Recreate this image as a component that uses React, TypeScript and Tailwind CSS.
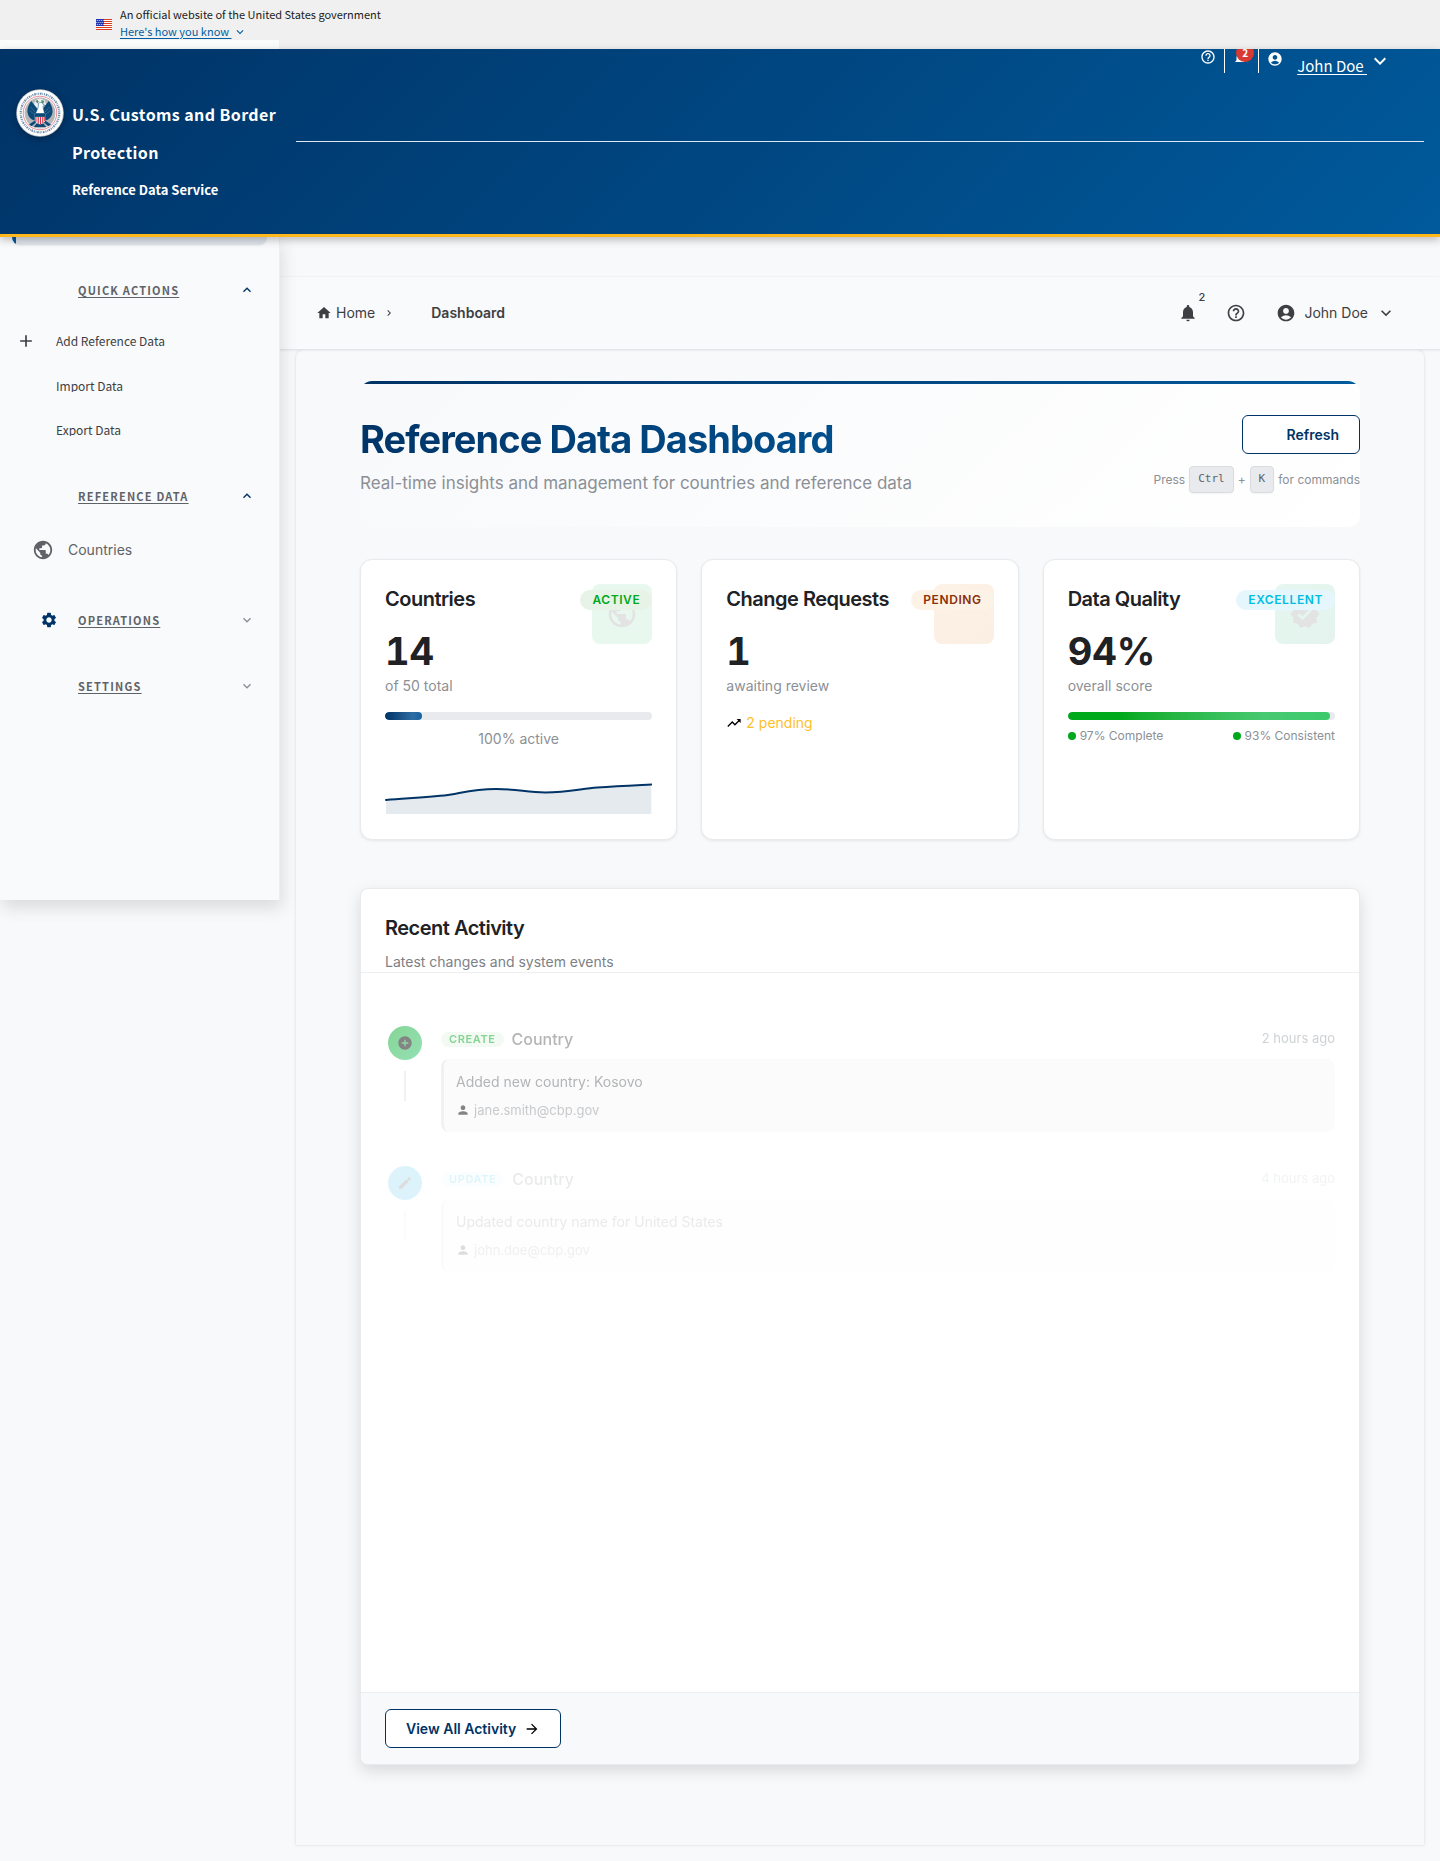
import type { ReactNode } from 'react';
import {
  MdAccountCircle,
  MdAdd,
  MdAddCircle,
  MdArrowForward,
  MdEdit,
  MdExpandLess,
  MdExpandMore,
  MdHelpOutline,
  MdHome,
  MdNavigateNext,
  MdNotifications,
  MdPerson,
  MdPublic,
  MdSettings,
  MdTrendingUp,
  MdVerified,
} from 'react-icons/md';

function Flag() {
  return (
    <svg viewBox="0 0 16 11" className="h-[11px] w-4 shrink-0" aria-hidden="true">
      <rect width="16" height="11" fill="#fff" />
      {[0, 2, 4, 6, 8, 10].map((y) => (
        <rect key={y} y={y} width="16" height="1" fill="#db3e1f" />
      ))}
      <rect width="8" height="7" fill="#1e33b1" />
      {[1, 3, 5].map((y) =>
        [1, 3, 5, 7].map((x) => (
          <rect key={`${x}-${y}`} x={y === 3 ? x - 0.6 : x - 0.2} y={y} width="0.9" height="0.9" fill="#fff" />
        )),
      )}
    </svg>
  );
}

function Seal() {
  return (
    <svg viewBox="0 0 48 48" className="h-12 w-12 shrink-0 drop-shadow-[0_2px_3px_rgba(0,0,0,0.3)]" role="img" aria-label="Department seal">
      <circle cx="24" cy="24" r="23.8" fill="#b9bcc0" />
      <circle cx="24" cy="24" r="23" fill="#fff" />
      <circle cx="24" cy="24" r="19.3" fill="none" stroke="#2f5f86" strokeWidth="2.2" strokeDasharray="1 0.9 1.6 0.8 0.7 0.9" opacity="0.7" />
      <circle cx="24" cy="24" r="16.8" fill="#fff" stroke="#e0707c" strokeWidth="0.8" />
      <circle cx="24" cy="24" r="15.4" fill="#b4b6b8" />
      <circle cx="24" cy="15.4" r="6" fill="#e9eef2" />
      <path d="M19.5 12.5l1.6-1.800 1.600 1.500-1 2.400zM25.500 10.800l2.600 1.200-.6 2.600-2-.6z" fill="#5b8f6a" />
      <path d="M22 20.500l-6.800-8.500c-2.300 3.500-4.400 8-3.600 12 .6 3.400 3 6.500 7 7.500zM26 20.500l6.800-8.500c2.300 3.500 4.400 8 3.600 12-.6 3.400-3 6.500-7 7.500z" fill="#0b4a78" />
      <path d="M14.500 18l5 5.500M13.500 21.500l5 4M33.500 18l-5 5.500M34.500 21.500l-5 4" stroke="#5d86a6" strokeWidth="0.5" />
      <path d="M22.600 14.400c1.600-1.800 4.300-.8 4.500 1.200l1.800.8-2 .8 1.600 7.300h-9l2.700-6z" fill="#fff" stroke="#0b4a78" strokeWidth="0.500" />
      <path d="M20.600 34.500h6.800l2.800 3.400H17.800zM13 35.500l5.600-3.800 1.400 1.800-4.400 3.700zM35 35.500l-5.600-3.800-1.400 1.800 4.400 3.700z" fill="#0b4a78" />
      <path d="M18.800 24.500h10.400v5.700c0 2.700-2.300 4-5.200 5.400-2.900-1.400-5.200-2.700-5.200-5.400z" fill="#fff" />
      <path d="M19.300 28h1.200v5h-1.200zM21.600 28h1.200v6.800h-1.200zM23.900 28h1.200v7.400h-1.200zM26.200 28h1.200v6h-1.200zM28.200 28h.8v4h-.8z" fill="#d4354a" />
      <path d="M18.800 24.300h10.400v3.600H18.800z" fill="#0b4a78" />
    </svg>
  );
}

function GovBanner() {
  return (
    <div className="relative flex h-[49px] items-center bg-[#f0f0f0] pl-24">
      <Flag />
      <div className="ml-2 -mt-[3px] font-['Noto_Sans_CJK_SC',sans-serif] text-[11px] leading-[17px] text-[#1b1b1b]">
        <p>An official website of the United States government</p>
        <button type="button" className="flex items-center gap-px text-[#005ea2]">
          <span className="whitespace-pre underline underline-offset-2">Here's how you know </span>
          <MdExpandMore className="h-[14px] w-[14px]" />
        </button>
      </div>
      <div className="absolute bottom-0 left-0 h-[9px] w-[279px] bg-[#fafcfc]" />
    </div>
  );
}

function SiteHeader() {
  return (
    <header className="relative z-20 flex border-b-[3px] border-[#ffb81c] bg-linear-135 from-[#003366] to-[#005a9c] font-['Noto_Sans_CJK_SC',sans-serif] text-white shadow-[0_3px_8px_rgba(0,0,0,0.25)]">
      <div className="flex w-[296px] shrink-0 gap-2 pt-10 pb-[25px] pl-4">
        <Seal />
        <div className="mt-[6px] font-bold">
          <p className="text-base leading-[38px] tracking-[0.4px]">U.S. Customs and Border Protection</p>
          <p className="text-[13px] leading-[38px]">Reference Data Service</p>
        </div>
      </div>
      <div className="min-w-0 flex-1 pr-4">
        <div className="flex h-6 justify-end pr-8">
          <button type="button" aria-label="Help" className="flex h-4 w-8 justify-center">
            <MdHelpOutline className="h-4 w-4" />
          </button>
          <div className="h-6 w-[35px] border-x border-white">
            <button type="button" aria-label="Notifications" className="relative block h-[13px] w-8 overflow-hidden">
              <MdNotifications className="absolute top-[2px] left-2 h-[14px] w-[14px]" />
              <span className="absolute top-[-5px] left-[11px] flex h-[18px] w-[18px] items-center justify-center rounded-full bg-[#d83933] text-[10px] leading-none font-bold">2</span>
            </button>
          </div>
          <button type="button" className="flex h-6 pl-2">
            <MdAccountCircle className="mt-[2px] h-4 w-4" />
            <span className="ml-[14px] whitespace-pre text-[15px] leading-[34px] underline underline-offset-2">John Doe </span>
            <MdExpandMore className="ml-px h-6 w-6" />
          </button>
        </div>
        <div className="mt-[68px] border-t border-[#dfe8f1]" />
      </div>
    </header>
  );
}

function GroupHeading({ label, open, icon }: { label: string; open?: boolean; icon?: ReactNode }) {
  return (
    <button
      type="button"
      aria-expanded={!!open}
      className="flex h-[42px] w-full items-center pr-6 pl-10 font-['Noto_Sans_CJK_SC',sans-serif] text-[11px] font-bold tracking-[1.2px] text-[#5f6368]"
    >
      <span className="w-[38px] text-[#003366]">{icon}</span>
      <span className="flex-1 text-left underline underline-offset-2">{label}</span>
      {open ? <MdExpandLess className="h-4 w-4 text-[#003366]" /> : <MdExpandMore className="h-4 w-4 text-[#8b9096]" />}
    </button>
  );
}

function Sidebar() {
  return (
    <aside className="relative z-10 h-[663px] w-[280px] shrink-0 border-r border-[#eceef1] bg-[#f9fafc] shadow-[2px_8px_16px_rgba(0,0,0,0.12)]">
      <div className="mx-3 mb-6 h-2 overflow-hidden rounded-b-lg bg-[#dfe5eb] shadow-xs">
        <div className="h-2 w-1 bg-[#005a9c]" />
      </div>
      <nav>
        <GroupHeading label="QUICK ACTIONS" open />
        <ul className="mt-2 mb-6 font-['Noto_Sans_CJK_SC',sans-serif] text-xs leading-4 text-[#3c4043]">
          <li>
            <a href="#add" className="flex h-11 items-center">
              <MdAdd className="ml-4 h-5 w-5" />
              <span className="ml-5">Add Reference Data</span>
            </a>
          </li>
          <li>
            <a href="#import" className="flex h-11 items-center pl-14">
              <span className="h-[14px] overflow-hidden">Import Data</span>
            </a>
          </li>
          <li>
            <a href="#export" className="flex h-11 items-center pl-14">
              <span className="h-[14px] overflow-hidden">Export Data</span>
            </a>
          </li>
        </ul>
        <GroupHeading label="REFERENCE DATA" open />
        <a href="#countries" className="mt-3 mb-7 flex h-[42px] items-center gap-[14px] pl-8 text-sm text-[#5f6368]">
          <MdPublic className="h-[22px] w-[22px]" />
          Countries
        </a>
        <GroupHeading label="OPERATIONS" icon={<MdSettings className="h-[18px] w-[18px]" />} />
        <div className="h-6" />
        <GroupHeading label="SETTINGS" />
      </nav>
    </aside>
  );
}

function BreadcrumbBar() {
  return (
    <div className="relative z-[1] mt-[39px] flex h-[74px] items-center justify-between border-y border-t-[#f1f2f4] border-b-[#e3e5e8] bg-[#f9fafc] pr-11 pl-9 text-sm text-[#3c4043] shadow-[0_1px_2px_rgba(0,0,0,0.06)]">
      <nav aria-label="Breadcrumb" className="flex items-center">
        <a href="#home" className="flex items-center gap-1">
          <MdHome className="h-4 w-4" />
          Home
        </a>
        <MdNavigateNext className="ml-2 h-3 w-3" />
        <span className="ml-9 font-semibold">Dashboard</span>
      </nav>
      <div className="flex items-center">
        <button type="button" aria-label="Notifications, 2 unread" className="relative">
          <MdNotifications className="h-5 w-5" />
          <span className="absolute -top-[14px] left-5 text-[11px] leading-4 font-medium">2</span>
        </button>
        <button type="button" aria-label="Help" className="ml-7">
          <MdHelpOutline className="h-5 w-5" />
        </button>
        <button type="button" className="ml-[30px] flex items-center">
          <MdAccountCircle className="h-5 w-5" />
          <span className="ml-2">John Doe</span>
          <MdExpandMore className="ml-2 h-5 w-5" />
        </button>
      </div>
    </div>
  );
}

function Hero() {
  return (
    <section className="mb-8 overflow-hidden rounded-xl bg-linear-135 from-[#f8f9fb] to-white">
      <div className="h-[3px] bg-linear-to-r from-[#003366] to-[#005a9c]" />
      <div className="flex h-[143px] items-start justify-between pt-[31px]">
        <div>
          <h1 className="w-fit bg-linear-135 from-[#003366] to-[#00508e] bg-clip-text text-[38px] leading-[48px] font-bold tracking-tight text-transparent">
            Reference Data Dashboard
          </h1>
          <p className="mt-2 text-[17px] leading-6 text-[#8b9096]">Real-time insights and management for countries and reference data</p>
        </div>
        <div className="flex flex-col items-end">
          <button type="button" className="h-[39px] rounded-md border border-[#003366] bg-white pr-5 pl-11 text-sm font-semibold text-[#003366]">
            Refresh
          </button>
          <p className="mt-3 flex items-center gap-1 text-xs text-[#8b9096]">
            Press
            <kbd className="h-[27px] rounded border border-[#dadce0] bg-[#e8eaed] px-2 font-['DejaVu_Sans_Mono',monospace] text-[11px] leading-6 text-[#5f6368] shadow-xs">Ctrl</kbd>
            +
            <kbd className="h-[27px] rounded border border-[#dadce0] bg-[#e8eaed] px-2 font-['DejaVu_Sans_Mono',monospace] text-[11px] leading-6 text-[#5f6368] shadow-xs">K</kbd>
            for commands
          </p>
        </div>
      </div>
    </section>
  );
}

type StatProps = {
  title: string;
  badge: string;
  badgeClass: string;
  tileClass: string;
  icon?: ReactNode;
  value: string;
  caption: string;
  children: ReactNode;
};

function StatCard({ title, badge, badgeClass, tileClass, icon, value, caption, children }: StatProps) {
  return (
    <article className="relative h-[281px] rounded-xl border border-[#e8eaed] bg-white px-6 pt-6 shadow-[0_1px_3px_rgba(0,0,0,0.08)]">
      <div className={`absolute top-6 right-6 flex h-[60px] w-[60px] items-center justify-center rounded-lg ${tileClass}`}>{icon}</div>
      <div className="relative flex h-[30px] items-center justify-between">
        <h2 className="text-xl font-semibold tracking-tight text-[#202124]">{title}</h2>
        <span className={`mt-px flex h-5 items-center rounded-full px-3 text-xs font-semibold tracking-[0.6px] ${badgeClass}`}>{badge}</span>
      </div>
      <p className="mt-4 text-[38px] leading-[42px] font-bold text-[#202124] tabular-nums">{value}</p>
      <p className="mt-1 text-sm leading-5 text-[#8b9096]">{caption}</p>
      {children}
    </article>
  );
}

function StatCards() {
  return (
    <section className="mb-12 grid grid-cols-3 gap-6">
      <StatCard
        title="Countries"
        badge="ACTIVE"
        badgeClass="bg-[#e8f3e8] text-[#00a91c]"
        tileClass="bg-[#e8f8ef]"
        icon={<MdPublic className="h-8 w-8 text-[#e3e3e3]" />}
        value="14"
        caption="of 50 total"
      >
        <div className="mt-4 h-2 overflow-hidden rounded-full bg-[#e8eaed]">
          <div className="h-full w-[14%] rounded-full bg-linear-to-r from-[#003366] via-[#2e6da4] via-75% to-[#1461a0]" />
        </div>
        <p className="mt-[9px] text-center text-sm leading-5 text-[#8b9096]">100% active</p>
        <svg viewBox="0 0 267 32" preserveAspectRatio="none" className="mt-[33px] h-8 w-full" aria-hidden="true">
          <path d="M1 18C26 16 50 15 66 12.500C80 10 90 7 111 7C132 7 142 10.500 160 10.500C182 10.500 195 7 212 5.500C232 4 245 3.500 266 2.500V32H1z" fill="#e5eaee" />
          <path d="M1 18C26 16 50 15 66 12.500C80 10 90 7 111 7C132 7 142 10.500 160 10.500C182 10.500 195 7 212 5.500C232 4 245 3.500 266 2.500" fill="none" stroke="#003366" strokeWidth="2" strokeLinecap="round" />
        </svg>
      </StatCard>
      <StatCard
        title="Change Requests"
        badge="PENDING"
        badgeClass="bg-[#fdf2e6] text-[#8b2f0a]"
        tileClass="bg-linear-135 from-[#fdf2e6] to-[#fbeee2]"
        value="1"
        caption="awaiting review"
      >
        <p className="mt-[17px] flex items-center gap-1 text-sm leading-5 text-[#ffbe2e]">
          <MdTrendingUp className="h-4 w-4 text-black" />2 pending
        </p>
      </StatCard>
      <StatCard
        title="Data Quality"
        badge="EXCELLENT"
        badgeClass="bg-[#e5f7fd] text-[#00bde3]"
        tileClass="bg-linear-135 from-[#e5f7f0] to-[#e4f3ed]"
        icon={<MdVerified className="h-8 w-8 text-[#e3e3e3]" />}
        value="94%"
        caption="overall score"
      >
        <div className="mt-4 h-2 overflow-hidden rounded-full bg-[#e8eaed]">
          <div className="h-full w-[98%] rounded-full bg-linear-to-r from-[#00a91c] from-20% via-[#46c970] via-75% to-[#3bca6c]" />
        </div>
        <div className="mt-2 flex justify-between text-xs leading-4 text-[#8b9096]">
          <span className="flex items-center gap-1">
            <i className="h-2 w-2 rounded-full bg-[#00a91c]" />
            97% Complete
          </span>
          <span className="flex items-center gap-1">
            <i className="h-2 w-2 rounded-full bg-[#00a91c]" />
            93% Consistent
          </span>
        </div>
      </StatCard>
    </section>
  );
}

type EventProps = {
  action: string;
  text: string;
  user: string;
  time: string;
  icon: ReactNode;
  dotClass: string;
  badgeClass: string;
  fadeClass: string;
};

function ActivityEvent({ action, text, user, time, icon, dotClass, badgeClass, fadeClass }: EventProps) {
  return (
    <li className={`flex h-[108px] gap-4 ${fadeClass}`}>
      <div className="flex w-10 shrink-0 flex-col items-center">
        <div className={`flex h-[34px] w-[34px] items-center justify-center rounded-full ${dotClass}`}>{icon}</div>
        <div className="mt-[11px] h-[30px] w-[2px] bg-[#e0e2e5]" />
      </div>
      <div className="min-w-0 flex-1">
        <div className="mt-px flex h-6 items-center">
          <span className={`flex h-[15px] items-center rounded-full px-2 text-[11px] font-semibold tracking-[0.6px] ${badgeClass}`}>{action}</span>
          <span className="ml-2 text-base font-medium text-[#5f6368]">Country</span>
          <time className="ml-auto text-[13px] text-[#9aa0a6]">{time}</time>
        </div>
        <div className="mt-2 h-[73px] rounded-lg border-l-[3px] border-[#e0e2e5] bg-[#f8f8f8] pt-[13px] pl-3">
          <p className="text-sm leading-5 text-[#5f6368]">{text}</p>
          <p className="mt-2 flex items-center gap-1 text-[13px] leading-5 text-[#8b9096]">
            <MdPerson className="h-[14px] w-[14px] text-black" />
            {user}
          </p>
        </div>
      </div>
    </li>
  );
}

function RecentActivity() {
  return (
    <section className="overflow-hidden rounded-lg border border-[#e8eaed] bg-white shadow-[0_6px_16px_rgba(0,0,0,0.13)]">
      <div className="h-[84px] border-b border-[#eceef0] px-6 pt-6">
        <h2 className="text-xl leading-[30px] font-semibold tracking-tight text-[#202124]">Recent Activity</h2>
        <p className="mt-[9px] text-sm leading-5 text-[#7c8187]">Latest changes and system events</p>
      </div>
      <ul className="flex h-[719px] flex-col gap-8 px-6 pt-[53px]">
        <ActivityEvent
          action="CREATE"
          text="Added new country: Kosovo"
          user="jane.smith@cbp.gov"
          time="2 hours ago"
          icon={<MdAddCircle className="h-4 w-4 text-black" />}
          dotClass="bg-linear-135 from-[#00a91c] to-[#21c063]"
          badgeClass="bg-[#e8f5e9] text-[#00a91c]"
          fadeClass="opacity-[0.48]"
        />
        <ActivityEvent
          action="UPDATE"
          text="Updated country name for United States"
          user="john.doe@cbp.gov"
          time="4 hours ago"
          icon={<MdEdit className="h-4 w-4 text-black" />}
          dotClass="bg-[#00a9e8]"
          badgeClass="bg-[#e5f7fd] text-[#00bde3]"
          fadeClass="opacity-[0.13]"
        />
      </ul>
      <div className="h-[72px] border-t border-[#eceef0] bg-[#f8f9fb] px-6 pt-4">
        <button type="button" className="flex h-[39px] items-center gap-2 rounded-md border border-[#003366] bg-white px-5 text-sm font-semibold text-[#003366]">
          View All Activity
          <MdArrowForward className="h-4 w-4 text-black" />
        </button>
      </div>
    </section>
  );
}

export default function App() {
  return (
    <div className="min-h-screen bg-[#f8f9fb] font-['Inter',sans-serif]">
      <GovBanner />
      <SiteHeader />
      <div className="flex items-start">
        <Sidebar />
        <main className="min-w-0 flex-1">
          <BreadcrumbBar />
          <div className="mx-4 mb-4 rounded-t-lg px-16 pt-[31px] pb-20 shadow-[0_0_3px_rgba(0,0,0,0.14)]">
            <Hero />
            <StatCards />
            <RecentActivity />
          </div>
        </main>
      </div>
    </div>
  );
}
